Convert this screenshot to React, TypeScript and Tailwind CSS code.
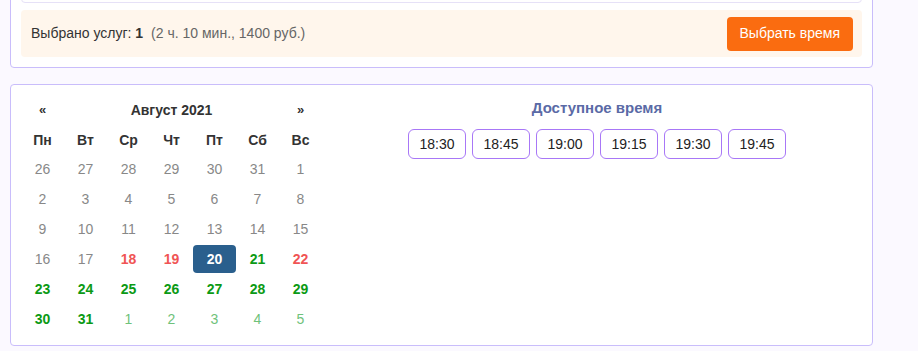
import React from 'react';

type Day = { n: number; kind: 'muted' | 'busy' | 'free' | 'next' | 'selected' };

const weekDays = ['Пн', 'Вт', 'Ср', 'Чт', 'Пт', 'Сб', 'Вс'];

const days: Day[] = [
  ...[26, 27, 28, 29, 30, 31].map((n) => ({ n, kind: 'muted' as const })),
  ...Array.from({ length: 17 }, (_, i) => ({ n: i + 1, kind: 'muted' as const })),
  { n: 18, kind: 'busy' },
  { n: 19, kind: 'busy' },
  { n: 20, kind: 'selected' },
  { n: 21, kind: 'free' },
  { n: 22, kind: 'busy' },
  ...Array.from({ length: 9 }, (_, i) => ({ n: i + 23, kind: 'free' as const })),
  ...[1, 2, 3, 4, 5].map((n) => ({ n, kind: 'next' as const })),
];

const dayClass: Record<Day['kind'], string> = {
  muted: 'text-[#888888]',
  busy: 'text-[#f05454] font-bold',
  free: 'text-[#0b9a14] font-bold',
  next: 'text-[#6fc27a]',
  selected: 'bg-[#2a5f8d] text-white font-bold rounded-[4px]',
};

const times = ['18:30', '18:45', '19:00', '19:15', '19:30', '19:45'];

export default function App() {
  return (
    <div
      className="min-h-[351px] bg-[#fbf9ff] pl-[10px] pr-[45px] overflow-hidden text-[14px] text-[#333]"
      style={{ fontFamily: '"Liberation Sans", Arial, sans-serif' }}
    >
      {/* Selected services summary */}
      <div className="-mt-[30px] bg-white border border-[#c9bdfb] rounded-[4px] p-[10px]">
        <div className="h-[22px] border border-[#e6e1f7] rounded-[4px]" />
        <div className="mt-[7px] h-[47px] bg-[#fff6ec] rounded-[4px] flex items-center justify-between pl-[10px] pr-[9px]">
          <div>
            Выбрано услуг: <b>1</b>
            <span className="ml-[8px] text-[#666]">(2 ч. 10 мин., 1400 руб.)</span>
          </div>
          <button className="h-[34px] px-[13px] bg-[#fa6c10] text-white rounded-[4px] text-[14px]">
            Выбрать время
          </button>
        </div>
      </div>

      {/* Calendar + times */}
      <div className="mt-4 bg-white border border-[#c9bdfb] rounded-[4px] p-[10px] flex">
        <div className="w-[301px] grid grid-cols-7 auto-rows-[30px] text-center">
          <div className="flex items-center justify-center font-bold text-[13px]">«</div>
          <div className="col-span-5 flex items-center justify-center font-bold">Август 2021</div>
          <div className="flex items-center justify-center font-bold text-[13px]">»</div>
          {weekDays.map((d) => (
            <div key={d} className="flex items-center justify-center font-bold">
              {d}
            </div>
          ))}
          {days.map((d, i) => (
            <div key={i} className="flex items-start justify-center pt-[-1px]">
              <span className={`w-[43px] h-[28px] flex items-center justify-center ${dayClass[d.kind]}`}>
                {d.n}
              </span>
            </div>
          ))}
        </div>

        <div className="flex-1 ml-[10px] text-center pt-[3px]">
          <div className="font-bold text-[15px] text-[#5a6aa6] leading-[20px]">Доступное время</div>
          <div className="mt-[11px] flex justify-center gap-[6px]">
            {times.map((t) => (
              <button
                key={t}
                className="w-[58px] h-[30px] border border-[#a877f7] rounded-[6px] text-[#222] text-[14px] bg-white"
              >
                {t}
              </button>
            ))}
          </div>
        </div>
      </div>
    </div>
  );
}
